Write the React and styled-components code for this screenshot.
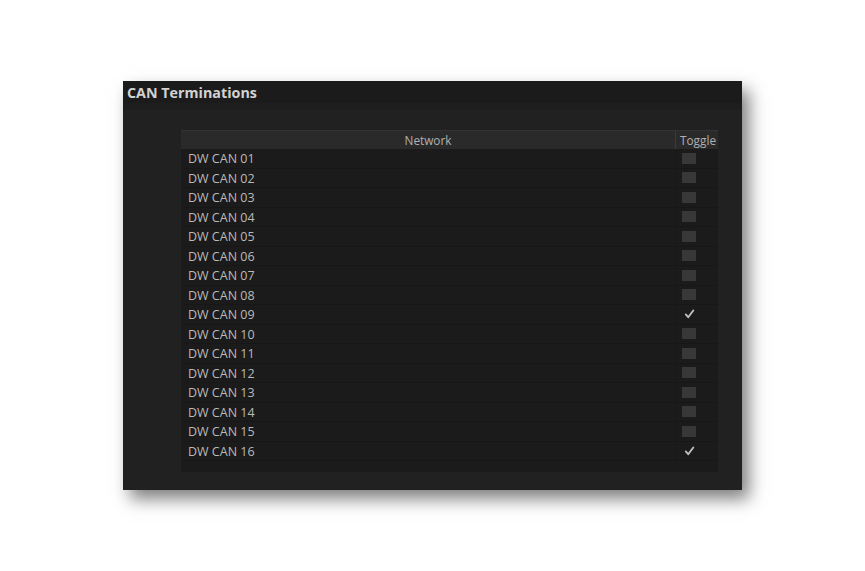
import React, { useState } from "react";
import styled, { createGlobalStyle } from "styled-components";

const GlobalStyle = createGlobalStyle`
  html, body {
    margin: 0;
    padding: 0;
    background: #ffffff;
  }
  body {
    font-family: "Open Sans", "Noto Sans", sans-serif;
  }
`;

const Page = styled.div`
  padding: 81px 0 0 123px;
  height: 571px;
  box-sizing: border-box;
`;

const Panel = styled.div`
  width: 619px;
  height: 409px;
  display: flex;
  flex-direction: column;
  background: #212121;
  box-shadow: 7px 9px 16px rgba(0, 0, 0, 0.5);
`;

const TitleBar = styled.div`
  height: 22px;
  display: flex;
  align-items: center;
  padding-left: 4px;
  background: #1b1b1b;
  color: #d2d2d2;
  font-weight: 700;
  font-size: 14.3px;
`;

const TitleRule = styled.div`
  height: 7px;
  background: #1e1e1e;
`;

const Body = styled.div`
  flex: 1;
  padding: 20px 24px 18px 58px;
  display: flex;
`;

const Table = styled.div`
  flex: 1;
  background: #1b1b1b;
  display: flex;
  flex-direction: column;
`;

const HeaderRow = styled.div`
  display: grid;
  grid-template-columns: 1fr 43px;
  height: 19px;
  background: #2a2a2a;
  border-top: 1px solid #333333;
  box-sizing: border-box;
`;

const HeaderCell = styled.div`
  display: flex;
  align-items: center;
  justify-content: ${(p) => (p.$center ? "center" : "flex-start")};
  padding-left: ${(p) => (p.$center ? "0" : "4px")};
  border-left: ${(p) => (p.$divider ? "1px solid #3a3a3a" : "none")};
  color: #b0b0b0;
  font-size: 11.8px;
`;

const Row = styled.div`
  display: grid;
  grid-template-columns: 1fr 43px;
  height: 19.5px;
  border-bottom: 1px solid #171717;
  box-sizing: border-box;
`;

const NameCell = styled.div`
  display: flex;
  align-items: center;
  padding-left: 7px;
  padding-top: 1px;
  color: #bababa;
  font-size: 12.5px;
`;

const ToggleCell = styled.div`
  display: flex;
  align-items: center;
  padding-left: 6px;
  border-left: 1px solid #181818;
  cursor: pointer;
`;

const Box = styled.div`
  width: 14px;
  height: 11px;
  background: ${(p) => (p.$on ? "transparent" : "#383838")};
  display: flex;
  align-items: center;
  justify-content: center;
`;

const Check = () => (
  <svg width="11" height="10" viewBox="0 0 11 10">
    <path
      d="M1.8 5.4 L4.2 8.3 L9.3 1.5"
      fill="none"
      stroke="#c4c4c4"
      strokeWidth="1.8"
      strokeLinecap="round"
      strokeLinejoin="round"
    />
  </svg>
);

const networks = Array.from({ length: 16 }, (_, i) => ({
  name: `DW CAN ${String(i + 1).padStart(2, "0")}`,
  on: i === 8 || i === 15,
}));

export default function App() {
  const [rows, setRows] = useState(networks);

  const toggle = (idx) =>
    setRows((r) => r.map((n, i) => (i === idx ? { ...n, on: !n.on } : n)));

  return (
    <Page>
      <GlobalStyle />
      <Panel>
        <TitleBar>CAN Terminations</TitleBar>
        <TitleRule />
        <Body>
          <Table>
            <HeaderRow>
              <HeaderCell $center>Network</HeaderCell>
              <HeaderCell $divider>Toggle</HeaderCell>
            </HeaderRow>
            {rows.map((n, i) => (
              <Row key={n.name}>
                <NameCell>{n.name}</NameCell>
                <ToggleCell onClick={() => toggle(i)}>
                  <Box $on={n.on}>{n.on && <Check />}</Box>
                </ToggleCell>
              </Row>
            ))}
          </Table>
        </Body>
      </Panel>
    </Page>
  );
}
